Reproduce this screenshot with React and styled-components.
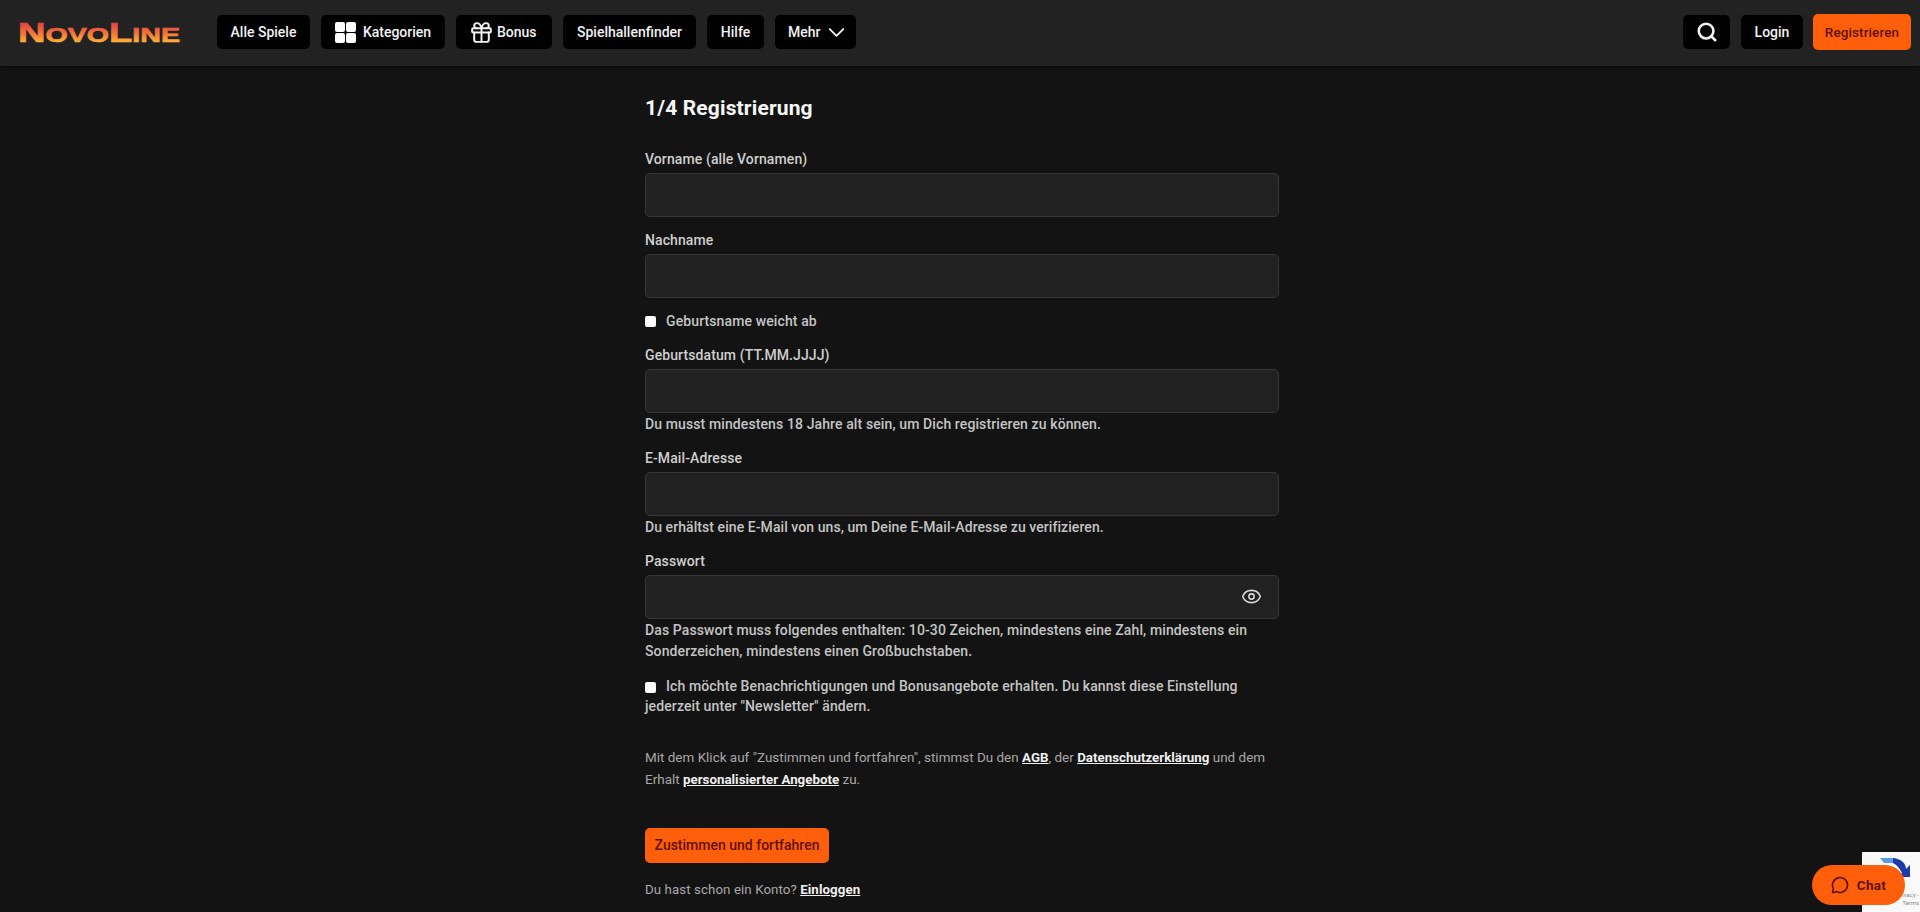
import React from "react";
import styled, { createGlobalStyle } from "styled-components";
import { Search, ChevronDown, Eye, MessageCircle, Gift } from "lucide-react";

const Global = createGlobalStyle`
  html, body { margin: 0; padding: 0; background: #131313; }
  body { font-family: Roboto, "Liberation Sans", Arial, sans-serif; color: #d4d4d4; overflow: hidden; }
  * { box-sizing: border-box; }
`;

const Page = styled.div`
  height: 912px;
  overflow: hidden;
  background: #131313;
`;

const Header = styled.header`
  height: 66px;
  background: #222222;
  box-shadow: 0 1px 3px rgba(0, 0, 0, 0.6);
  display: flex;
  align-items: center;
  padding: 0 9px 2px 18px;
`;

const Logo = styled.svg`
  flex: none;
  display: block;
  width: 162px;
  height: 36px;
  margin-right: 37px;
  overflow: visible;
  font-family: "Liberation Sans", Arial, sans-serif;
  font-weight: 700;
  font-size: 28px;
`;

const Nav = styled.nav`
  display: flex;
  gap: 11px;
  flex: 1;
`;

const NavButton = styled.button`
  height: 34px;
  width: ${(p) => p.$w}px;
  margin-left: ${(p) => p.$ml || 0}px;
  display: flex;
  align-items: center;
  justify-content: ${(p) => (p.$start ? "flex-start" : "center")};
  gap: ${(p) => p.$gap || 0}px;
  padding: 0 0 0 ${(p) => p.$pl || 0}px;
  border: 0;
  border-radius: 5px;
  background: #000;
  color: #f2f2f2;
  font: 500 14px Roboto, sans-serif;
`;

const Actions = styled.div`
  display: flex;
  align-items: center;
  gap: 10px;
`;

const OrangeButton = styled.button`
  display: block;
  height: ${(p) => p.$h}px;
  width: ${(p) => p.$w}px;
  padding: 0;
  border: 0;
  border-radius: 5px;
  background: #ff5f0a;
  color: #631000;
  font: 500 ${(p) => p.$fs || 14}px Roboto, sans-serif;
  letter-spacing: ${(p) => p.$ls || 0}px;
`;

const Grid = styled.span`
  display: grid;
  grid-template-columns: 10px 10px;
  grid-auto-rows: 10px;
  gap: 1px;
`;

const Cell = styled.span`
  background: #fff;
  border-radius: 2px;
`;

const Main = styled.main`
  width: 634px;
  margin-left: 645px;
  padding-top: 28px;
`;

const Title = styled.h1`
  margin: 0 0 28px;
  font: 700 21px/28px Roboto, sans-serif;
  letter-spacing: 0.15px;
  color: #f7f7f7;
`;

const Field = styled.div`
  margin-bottom: ${(p) => p.$mb || 0}px;
`;

const Label = styled.label`
  display: block;
  height: 18px;
  margin-bottom: 5px;
  font: 500 14px/18px Roboto, sans-serif;
  letter-spacing: 0.1px;
  color: #cfcfcf;
`;

const InputWrap = styled.div`
  position: relative;
  height: 44px;
`;

const Input = styled.input`
  display: block;
  width: 100%;
  height: 100%;
  background: #212121;
  border: 1px solid #373737;
  border-radius: 5px;
  outline: none;
`;

const EyeIcon = styled(Eye)`
  position: absolute;
  right: 17px;
  top: 11px;
  color: #d8d8d8;
`;

const Hint = styled.p`
  margin: 0;
  padding-top: 1px;
  font: 500 14px/21px Roboto, sans-serif;
  letter-spacing: ${(p) => p.$ls ?? 0.11}px;
  color: #c4c4c4;
`;

const CheckRow = styled.div`
  display: flex;
  align-items: ${(p) => (p.$top ? "flex-start" : "center")};
  gap: 10px;
  margin-bottom: ${(p) => p.$mb}px;
`;

const Box = styled.span`
  flex: none;
  width: 11px;
  height: 11px;
  margin-top: ${(p) => (p.$top ? 6 : 1)}px;
  border-radius: 2px;
  background: #fff;
`;

const CheckText = styled.div`
  font: 500 14px/20.5px Roboto, sans-serif;
  letter-spacing: 0.11px;
  color: #c4c4c4;
`;

const Legal = styled.div`
  margin: 30px 0 37px;
  font: 400 13.43px/22px Roboto, sans-serif;
  letter-spacing: 0.02px;
  color: #a8a8a8;
`;

const Strong = styled.a`
  color: #f0f0f0;
  font-weight: 700;
  font-size: 13.3px;
  text-decoration: underline;
`;

const Foot = styled.p`
  margin: 16px 0 0;
  font: 400 13.3px/22px Roboto, sans-serif;
  letter-spacing: 0.08px;
  color: #a8a8a8;
`;

const Captcha = styled.div`
  position: fixed;
  right: 0;
  bottom: 0;
  width: 58px;
  height: 60px;
  background: #f9f9f9;
  padding: 5px 0 0 18px;
  overflow: hidden;
`;

const CaptchaLinks = styled.div`
  position: absolute;
  right: 1px;
  bottom: 5px;
  width: 26px;
  text-align: right;
  font: 400 6px/8px Roboto, sans-serif;
  color: #8a8a8a;
`;

const Chat = styled.div`
  position: fixed;
  left: 1812px;
  top: 865px;
  width: 93px;
  height: 40px;
  border-radius: 20px;
  background: #ff5f0a;
  color: #631000;
  display: flex;
  align-items: center;
  justify-content: center;
  gap: 8px;
  font: 700 13.5px Roboto, sans-serif;
  letter-spacing: 0.3px;
`;

const fields = (label, hint, mb, ls) => (
  <Field $mb={mb}>
    <Label>{label}</Label>
    <InputWrap>
      <Input />
    </InputWrap>
    {hint && <Hint $ls={ls}>{hint}</Hint>}
  </Field>
);

export default function App() {
  return (
    <Page>
      <Global />
      <Header>
        <Logo viewBox="0 0 162 36">
          <defs>
            <linearGradient id="logoFill" gradientUnits="userSpaceOnUse" x1="0" y1="8" x2="0" y2="29">
              <stop offset="0" stopColor="#e03d48" />
              <stop offset="0.5" stopColor="#f1703a" />
              <stop offset="1" stopColor="#fdb637" />
            </linearGradient>
          </defs>
          <text
            x="0"
            y="28"
            textLength="162"
            lengthAdjust="spacingAndGlyphs"
            fill="url(#logoFill)"
            stroke="url(#logoFill)"
            strokeWidth="0.7"
          >
            N<tspan fontSize="21">OVO</tspan>L<tspan fontSize="21">INE</tspan>
          </text>
        </Logo>
        <Nav>
          <NavButton $w={93}>Alle Spiele</NavButton>
          <NavButton $w={124} $gap={7}>
            <Grid>
              <Cell />
              <Cell />
              <Cell />
              <Cell />
            </Grid>
            Kategorien
          </NavButton>
          <NavButton $w={96} $gap={3} $pl={13} $start>
            <Gift size={25} strokeWidth={1.9} />
            Bonus
          </NavButton>
          <NavButton $w={133}>Spielhallenfinder</NavButton>
          <NavButton $w={57}>Hilfe</NavButton>
          <NavButton $w={81} $gap={3} $pl={13} $start>
            Mehr
            <ChevronDown size={27} strokeWidth={1.7} />
          </NavButton>
        </Nav>
        <Actions>
          <NavButton $w={47}>
            <Search size={22} strokeWidth={2.8} />
          </NavButton>
          <NavButton $w={62} $ml={1}>
            Login
          </NavButton>
          <OrangeButton $w={98} $h={36} $fs={13.5} $ls={0.1}>
            Registrieren
          </OrangeButton>
        </Actions>
      </Header>
      <Main>
        <Title>1/4 Registrierung</Title>
        {fields("Vorname (alle Vornamen)", null, 14)}
        {fields("Nachname", null, 13)}
        <CheckRow $mb={14}>
          <Box />
          <CheckText>Geburtsname weicht ab</CheckText>
        </CheckRow>
        {fields("Geburtsdatum (TT.MM.JJJJ)", "Du musst mindestens 18 Jahre alt sein, um Dich registrieren zu können.", 14)}
        {fields("E-Mail-Adresse", "Du erhältst eine E-Mail von uns, um Deine E-Mail-Adresse zu verifizieren.", 14, 0.07)}
        <Field $mb={14}>
          <Label>Passwort</Label>
          <InputWrap>
            <Input />
            <EyeIcon size={21} strokeWidth={1.8} />
          </InputWrap>
          <Hint>
            Das Passwort muss folgendes enthalten: 10-30 Zeichen, mindestens eine Zahl, mindestens ein
            Sonderzeichen, mindestens einen Großbuchstaben.
          </Hint>
        </Field>
        <CheckRow $top $mb={0}>
          <Box $top />
          <CheckText>Ich möchte Benachrichtigungen und Bonusangebote erhalten. Du kannst diese Einstellung</CheckText>
        </CheckRow>
        <CheckText>jederzeit unter "Newsletter" ändern.</CheckText>
        <Legal>
          <div>
            Mit dem Klick auf "Zustimmen und fortfahren", stimmst Du den <Strong>AGB</Strong>, der{" "}
            <Strong>Datenschutzerklärung</Strong> und dem
          </div>
          <div>
            Erhalt <Strong>personalisierter Angebote</Strong> zu.
          </div>
        </Legal>
        <OrangeButton $w={184} $h={35}>
          Zustimmen und fortfahren
        </OrangeButton>
        <Foot>
          Du hast schon ein Konto? <Strong>Einloggen</Strong>
        </Foot>
      </Main>
      <Captcha>
        <svg width="30" height="20" viewBox="0 0 30 20">
          <path d="M0 1 H15 V6 H4 Z" fill="#5b9bea" />
          <path d="M13 1 C22 2 26 7 26 12 L30 8 V20 H18 L22 16 C20 12 17 8 13 6 Z" fill="#1c3aa9" />
        </svg>
        <CaptchaLinks>Privacy - Terms</CaptchaLinks>
      </Captcha>
      <Chat>
        <MessageCircle size={18} strokeWidth={2.2} />
        Chat
      </Chat>
    </Page>
  );
}
